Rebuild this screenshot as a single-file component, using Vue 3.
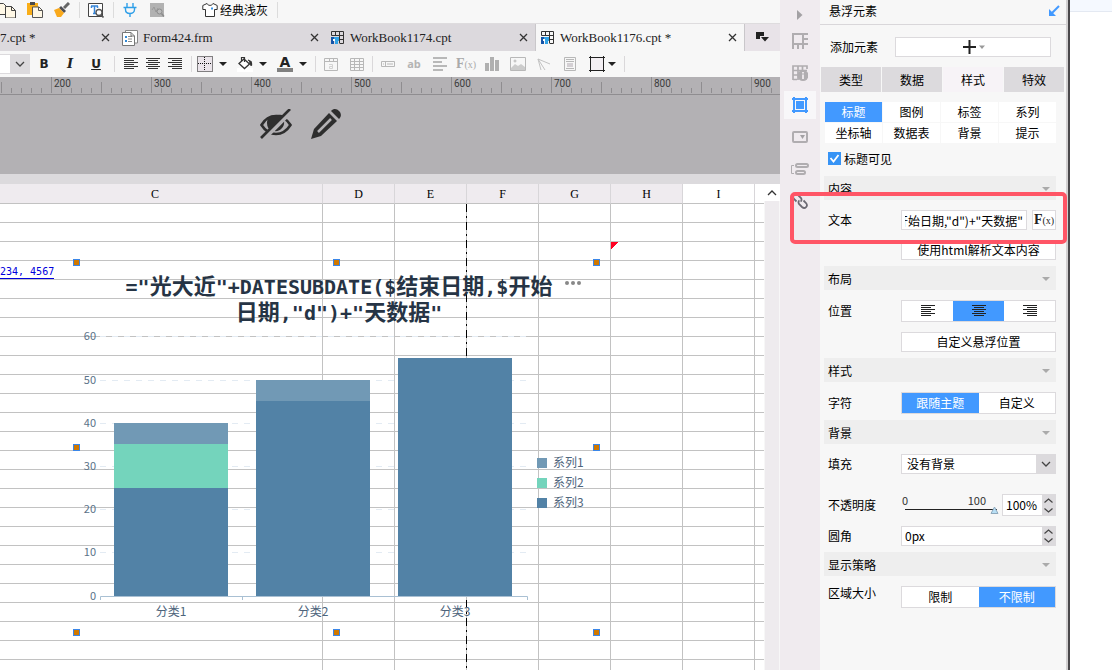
<script setup>
import { computed, onMounted, ref } from 'vue'

const rulerMarks = [200, 300, 400, 500, 600, 700, 800, 900]
const columns = ['C', 'D', 'E', 'F', 'G', 'H', 'I', '']
const rows = 40

const titleLines = [
  ['="', '光大近', '"+DATESUBDATE($', '结束日期', ',$', '开始'],
  ['', '日期', ',"d")+"', '天数据', '"']
]

const base = 334
const unit = 4.32
const series = [
  { name: '系列3', color: '#5282a6' },
  { name: '系列2', color: '#74d4bc' },
  { name: '系列1', color: '#7199b5' }
]
const data = [
  { label: '分类1', values: [25, 10, 5] },
  { label: '分类2', values: [45, 0, 5] },
  { label: '分类3', values: [55, 0, 0] }
]
const yOf = (v) => Math.floor(base - v * unit)
const bars = computed(() =>
  data.flatMap((d, i) => {
    let sum = 0
    return d.values.map((v, s) => {
      const bottom = yOf(sum)
      sum += v
      return { key: `${i}-${s}`, x: 38 + i * 142, y: yOf(sum), h: bottom - yOf(sum), color: series[s].color }
    })
  }).filter((b) => b.h > 0)
)
const legend = [...series].reverse()
const ticks = [0, 10, 20, 30, 40, 50, 60]
const handles = [[0, 0], [260, 0], [520, 0], [0, 185], [520, 185], [0, 370], [260, 370], [520, 370]]

const panelTabs = ['类型', '数据', '样式', '特效']
const activeTab = ref('样式')
const options = ['标题', '图例', '标签', '系列', '坐标轴', '数据表', '背景', '提示']
const activeOption = ref('标题')
const titleVisible = ref(true)
const formula = ref('="光大近"+DATESUBDATE($结束日期,$开始日期,"d")+"天数据"')
const formulaInput = ref(null)
const align = ref('center')
const charMode = ref('跟随主题')
const sizeMode = ref('不限制')
const opacity = ref(100)

onMounted(() => {
  formulaInput.value.scrollLeft = formulaInput.value.scrollWidth
})
</script>

<template>
  <div class="app">
    <main class="editor">
      <header class="topbar">
        <button class="tool" aria-label="复制">
          <svg width="16" height="16" viewBox="0 0 16 16"><path d="M-3 1.500H3.500L6.500 4.500V12.500H-3z" fill="#fff8e6" stroke="#444" /><path d="M5.500 4.500H11.500L15.500 8.500V16H5.500z" fill="#fff8e6" stroke="#444" /><path d="M11.500 4.500V8.500H15.500" fill="none" stroke="#444" /></svg>
        </button>
        <button class="tool" aria-label="粘贴">
          <svg width="16" height="16" viewBox="0 0 16 16"><path d="M0 1H11V13H0z" fill="#f9ae18" /><path d="M3 0H8V3H3z" fill="#4a4a4a" /><path d="M5.500 5H12L15.500 8.500V15.500H5.500z" fill="#fff8e6" stroke="#555" /><path d="M11.500 5V8.500H15.500" fill="none" stroke="#555" /></svg>
        </button>
        <button class="tool" aria-label="格式刷">
          <svg width="16" height="16" viewBox="0 0 16 16"><path d="M15 1L10 6" stroke="#666" stroke-width="3" /><path d="M7 4L12 9L10 11L5 6z" fill="#4f4f55" /><path d="M5 6L10 11L7 15H3L0 8z" fill="#f9a91c" /></svg>
        </button>
        <i class="bar-sep"></i>
        <button class="tool" aria-label="模板查找">
          <svg width="16" height="16" viewBox="0 0 16 16"><path d="M.5 1.500H14.500V14.500H.5z" fill="#fff" stroke="#444" /><path d="M3 4H10M6.500 4V11M5 11.500H8M3.500 4V6M9.500 4V6" fill="none" stroke="#3685d8" stroke-width="1.500" /><circle cx="11" cy="10.500" r="3" fill="#fff" stroke="#555" stroke-width="1.300" /><path d="M13 13L15.500 15.500" stroke="#555" stroke-width="1.600" /></svg>
        </button>
        <i class="bar-sep"></i>
        <button class="tool" aria-label="插件">
          <svg width="16" height="16" viewBox="0 0 16 16" fill="none" stroke="#2f9fe8" stroke-width="1.400"><path d="M5 1V5M11 1V5M1.500 5.500H14.500M3.500 6V7.500C3.500 10 5.500 11.500 8 11.500S12.500 10 12.500 7.500V6M8 11.500V15" /></svg>
        </button>
        <button class="tool" aria-label="性能分析">
          <svg width="16" height="16" viewBox="0 0 16 16"><path d="M1 1H15V15H1z" fill="#b2b2b2" /><path d="M3 8L5 5L7 10L9 6" fill="none" stroke="#999" /><circle cx="10.500" cy="9.500" r="2.500" fill="#bbb" stroke="#8c8c8c" /><path d="M12.500 11.500L15 14.500" stroke="#8c8c8c" stroke-width="1.500" /></svg>
        </button>
        <button class="theme">
          <svg width="16" height="16" viewBox="0 0 16 16"><path d="M5 1.500L.8 3.500V7.500H3.500V14.500H12.500V7.500H15.200V3.500L11 1.500C10 4 6 4 5 1.500z" fill="#fff" stroke="#333" /><path d="M9 6.500H11" stroke="#3a95ea" stroke-width="2" /></svg>
          <span>经典浅灰</span>
        </button>
        <i class="bar-sep"></i>
      </header>

      <nav class="tabs">
        <div class="tab first"><span>7.cpt *</span><button class="close" aria-label="关闭"><svg width="9" height="9" viewBox="0 0 9 9"><path d="M1 1L8 8M8 1L1 8" /></svg></button></div>
        <div class="tab">
          <svg width="16" height="16" viewBox="0 0 16 16"><path d="M3.500 3V.5H15.500V13H12" fill="#fff" stroke="#888" /><path d="M.5 2.500H9L12.500 6V15.500H.5z" fill="#fff" stroke="#777" /><path d="M3 6H5V8H3zM3 10H5V12H3z" fill="#3389d6" /><path d="M6 6.500H10M6 11.500H10M6 9H10" stroke="#888" /><path d="M9 2.500V6H12.500" fill="none" stroke="#777" /></svg>
          <span>Form424.frm</span><button class="close" aria-label="关闭"><svg width="9" height="9" viewBox="0 0 9 9"><path d="M1 1L8 8M8 1L1 8" /></svg></button>
        </div>
        <div v-for="(t, i) in ['WorkBook1174.cpt', 'WorkBook1176.cpt *']" :key="t" class="tab" :class="{ active: i === 1 }">
          <svg width="14" height="14" viewBox="0 0 14 14"><path d="M.5 4.500V.5H12.500V12.500H9M.5 4.500H12.500M4.500 .5V4.500M8.500 .5V12.500M8.500 8.500H12.500" fill="none" stroke="#333" /><path d="M0 6H3V13H0z" fill="#1454a8" /><path d="M3 6H8V10H7V13H4V10H3z" fill="#31a3e6" /><path d="M2 8H4V10H2z" fill="#fff" /></svg>
          <span>{{ t }}</span><button class="close" aria-label="关闭"><svg width="9" height="9" viewBox="0 0 9 9"><path d="M1 1L8 8M8 1L1 8" /></svg></button>
        </div>
        <button class="tab-menu" aria-label="标签列表">
          <svg width="13" height="11" viewBox="0 0 13 11"><path d="M0 0H8V4H4V7H0z M5 5H13L9 9.500z" fill="#222" /></svg>
        </button>
      </nav>

      <div class="format">
        <button class="combo" aria-label="字号"><i></i><svg width="10" height="6" viewBox="0 0 10 6"><path d="M1 1L5 5L9 1" fill="none" stroke="#444" stroke-width="1.300" /></svg></button>
        <button class="letter"><b>B</b></button>
        <button class="letter"><em>I</em></button>
        <button class="letter"><u>U</u></button>
        <i class="sep"></i>
        <button class="al" aria-label="左对齐"><svg width="14" height="12" viewBox="0 0 14 12"><path d="M0 .5H14M0 2.500H10M0 4.500H14M0 6.500H10M0 8.500H14M0 10.500H10" stroke="#333" /></svg></button>
        <button class="al" aria-label="居中"><svg width="14" height="12" viewBox="0 0 14 12"><path d="M0 .5H14M2 2.500H12M0 4.500H14M2 6.500H12M0 8.500H14M2 10.500H12" stroke="#333" /></svg></button>
        <button class="al" aria-label="右对齐"><svg width="14" height="12" viewBox="0 0 14 12"><path d="M0 .5H14M4 2.500H14M0 4.500H14M4 6.500H14M0 8.500H14M4 10.500H14" stroke="#333" /></svg></button>
        <i class="sep"></i>
        <div class="drops">
          <button class="drop" aria-label="边框"><svg width="16" height="16" viewBox="0 0 16 16"><path d="M.5 .5H15.500V15.500H.5z" fill="#eae4ea" stroke="#111" stroke-dasharray="1 1" /><path d="M7.500 1V15M1 7.500H15" stroke="#111" stroke-dasharray="1 1" /></svg><i class="caret"></i></button>
          <button class="drop" aria-label="填充"><svg width="16" height="16" viewBox="0 0 16 16"><path d="M0 12H16V16H0z" fill="#fff" /><path d="M7 3L12.500 8L7.500 12.500L2 7.500z" fill="#fff" stroke="#333" stroke-width="1.300" /><path d="M4.500 5V1.500H7.500V6M11 4L14 5.500V10" fill="none" stroke="#333" stroke-width="1.200" /><path d="M12 5C15 5 15.500 7 15 10L12.500 8z" fill="#333" /></svg><i class="caret"></i></button>
          <button class="drop" aria-label="字体颜色"><span class="fc">A</span><i class="caret"></i></button>
        </div>
        <i class="sep"></i>
        <div class="grays">
          <button class="gray" aria-label="单元格"><svg width="14" height="13" viewBox="0 0 14 13"><path d="M.5 .5H13.500V12.500H.5zM.5 3.500H13.500M5.500 .5V3.500M9.500 .5V3.500" /><path d="M5 6.500H8.500V10.500H5.500V8.500H8" stroke="#d3d3d3" /></svg></button>
          <button class="gray" aria-label="表格"><svg width="14" height="13" viewBox="0 0 14 13"><path d="M.5 .5H13.500V12.500H.5zM.5 3.500H13.500M.5 6.500H13.500M.5 9.500H13.500M4.500 .5V12.500M9.500 .5V12.500" /></svg></button>
        </div>
        <i class="sep"></i>
        <div class="grays">
          <button class="gray" aria-label="控件"><svg width="14" height="6" viewBox="0 0 14 6"><path d="M.5 .5H13.500V5.500H.5zM4.500 .5V5.500M6 3H12M2 3H3" /></svg></button>
          <button class="gray ab">ab</button>
          <button class="gray" aria-label="富文本"><svg width="14" height="14" viewBox="0 0 14 14"><path d="M0 1H14M0 5H9M0 9H14M0 13H10" stroke-width="2" /></svg></button>
          <button class="gray fx"><span><b>F</b>(x)</span></button>
          <button class="gray" aria-label="图表"><svg width="14" height="14" viewBox="0 0 14 14"><path d="M0 6H4V14H0zM5 0H9V14H5zM10 3H14V14H10z" fill="#b0b0b0" stroke="none" /></svg></button>
          <button class="gray" aria-label="图片"><svg width="16" height="14" viewBox="0 0 16 14"><path d="M.5 .5H15.500V13.500H.5z" /><path d="M1 11L5 7L8 9L11 7L15 10V13H1z" fill="#ccc" stroke="none" /><circle cx="5" cy="4" r="1" /></svg></button>
          <button class="gray" aria-label="斜线"><svg width="14" height="13" viewBox="0 0 14 13"><path d="M1 1L13 6M1 1L8 12M1 1L4 12" stroke="#c2c2c2" /></svg></button>
          <button class="gray" aria-label="子报表"><svg width="12" height="14" viewBox="0 0 12 14"><path d="M.5 .5H11.500V13.500H.5zM2 2.500H10M2 4.500H10M2 11.500H10" /><path d="M3 6H9V10H3z" fill="#d4d0d4" stroke="none" /></svg></button>
          <button class="drop wide" aria-label="悬浮元素"><svg width="16" height="16" viewBox="0 0 16 16"><path d="M1.500 0V16M14.500 0V16M0 1.500H16M0 14.500H16" stroke="#222" /><path d="M2 2H14V14H2z" fill="#f3eff3" /></svg><i class="caret"></i></button>
        </div>
        <i class="sep"></i>
      </div>

      <div class="ruler"><span v-for="m in rulerMarks" :key="m">{{ m }}</span></div>

      <div class="canvas">
        <button aria-label="隐藏">
          <svg width="32" height="30" viewBox="0 0 32 30"><path d="M1.500 16C6 8 11 7 16 7S26 9 30.500 16C26 23 21 25 16 25S6 23 1.500 16z" fill="none" stroke="#2e2e2e" stroke-width="2.600" /><path d="M22 6C10 5 7 9 7 14C7 18 9 20 10 21L24 8z" fill="#2e2e2e" /><path d="M24 12C25 18 20 23 14 22z" fill="#2e2e2e" /><path d="M3 31L32 2" stroke="#b3b1b4" stroke-width="4" /><path d="M1 29L30 0" stroke="#2e2e2e" stroke-width="2.600" /></svg>
        </button>
        <button aria-label="编辑">
          <svg width="30" height="30" viewBox="0 0 30 30"><path d="M3 20L18 4L26 12L10 27L0 30z" fill="#2e2e2e" /><path d="M20 2C23-1 26 0 28 2S31 7 28 10z" fill="#2e2e2e" /><path d="M7 23L20 10" stroke="#b3b1b4" stroke-width="2.500" /></svg>
        </button>
      </div>

      <section class="sheet-area">
        <div class="sheet">
          <table>
            <colgroup><col class="c-first" /><col v-for="n in 6" :key="n" class="c-mid" /><col /></colgroup>
            <thead><tr><th v-for="c in columns" :key="c" :class="{ light: c === 'I' || !c }">{{ c }}</th></tr></thead>
            <tbody>
              <tr v-for="r in rows" :key="r">
                <td v-for="(c, i) in columns" :key="c" :class="{ note: r === 3 && i === 5 }"><a v-if="r === 4 && i === 0" href="#">234, 4567</a></td>
              </tr>
            </tbody>
          </table>
          <div class="page-line"></div>
          <svg class="chart" width="520" height="370" viewBox="0 0 520 370">
            <text v-for="(line, li) in titleLines" :key="li" class="title" x="263" :y="32 + li * 26"><tspan v-for="(part, pi) in line" :key="pi" :class="{ han: pi % 2 }">{{ part }}</tspan></text>
            <g fill="#888"><circle cx="491" cy="21" r="2" /><circle cx="497" cy="21" r="2" /><circle cx="503" cy="21" r="2" /></g>
            <g v-for="t in ticks" :key="t">
              <path v-if="t" :d="`M24 ${yOf(t) + .5}H451`" stroke="#e3ebf3" stroke-dasharray="6 6" />
              <text class="tick" x="20" :y="yOf(t) + 4">{{ t }}</text>
            </g>
            <rect v-for="b in bars" :key="b.key" :x="b.x" :y="b.y" width="114" :height="b.h" :fill="b.color" />
            <path d="M24.500 338V334.500H451.500V338M166.500 334V338" fill="none" stroke="#a9c0d3" />
            <text v-for="(d, i) in data" :key="d.label" class="cat" :x="95 + i * 142" y="354">{{ d.label }}</text>
            <g v-for="(s, i) in legend" :key="s.name">
              <rect x="461" :y="196 + i * 20" width="10" height="10" :fill="s.color" />
              <text class="leg" x="477" :y="205 + i * 20">{{ s.name }}</text>
            </g>
            <rect v-for="(h, i) in handles" :key="'h' + i" :x="h[0] - 2.5" :y="h[1] - 2.5" width="6" height="6" fill="#d07800" stroke="#3a86e8" />
          </svg>
        </div>
        <div class="scroll">
          <button aria-label="向上滚动"><svg width="10" height="6" viewBox="0 0 10 6"><path d="M1 5L5 1L9 5" fill="none" stroke="#333" stroke-width="1.300" /></svg></button>
          <i></i>
        </div>
      </section>
    </main>

    <aside class="rail">
      <button class="fold" aria-label="收起"><svg width="6" height="10" viewBox="0 0 6 10"><path d="M0 0L5.500 5L0 10z" fill="#a3a1a4" /></svg></button>
      <button aria-label="单元格元素"><svg width="16" height="16" viewBox="0 0 16 16" fill="none" stroke="#b0adb0" stroke-width="2"><path d="M1 16V1H16M11 1V11H1M11 6H16M11 11H16M6 11V16M11 11V16" /></svg></button>
      <button aria-label="单元格属性"><svg width="16" height="16" viewBox="0 0 16 16"><path d="M1 15V1H15V4M1 5.500H15M1 10H6M6 1V15M10.500 1V6M1 14.500H5" fill="none" stroke="#b0adb0" stroke-width="1.700" /><circle cx="11" cy="10.500" r="5.500" fill="#b0adb0" /><path d="M11 7V8.500M11 9.500V14" stroke="#f0ebef" stroke-width="1.800" /></svg></button>
      <button class="on" aria-label="悬浮元素"><svg width="16" height="16" viewBox="0 0 16 16"><path d="M0 2H16M0 14H16M2 0V16M14 0V16" stroke="#4299ff" stroke-width="2" /><path d="M4 4H12V12H4z" fill="#4299ff" /></svg></button>
      <button aria-label="控件设置"><svg width="16" height="12" viewBox="0 0 16 12"><rect x="1" y="1" width="14" height="10" rx="1" fill="none" stroke="#b0adb0" stroke-width="2" /><path d="M8 4H13L10.500 8z" fill="#a3a1a4" /></svg></button>
      <button aria-label="条件属性"><svg width="18" height="12" viewBox="0 0 18 12" fill="none" stroke="#b0adb0"><path d="M3 2.500H.5V10.500H3" /><rect x="5" y="1" width="12" height="3" rx="1.500" stroke-width="2" /><rect x="5" y="8" width="9" height="3" rx="1.500" stroke-width="2" /></svg></button>
      <button aria-label="超级链接"><svg width="16" height="16" viewBox="0 0 16 16" fill="none" stroke="#6c6a73" stroke-width="1.800"><path d="M4.500 8.500L2 6C-.5 3 3-.5 6 2L9 5C10 6.500 9.500 8 8.500 8.500M11.500 7.500L14 10C16.500 13 13 16.500 10 14L7 11C6 9.500 6.500 8 7.500 7.500" /></svg></button>
    </aside>

    <aside class="panel">
      <header class="panel-title"><span>悬浮元素</span><button aria-label="停靠"><svg width="12" height="12" viewBox="0 0 12 12"><path d="M11 1L3 9" stroke="#4299ff" stroke-width="2" /><path d="M1 4V11H8z" fill="#4299ff" /></svg></button></header>
      <div class="add-row">
        <span id="add-label">添加元素</span>
        <button aria-labelledby="add-label"><svg width="24" height="14" viewBox="0 0 24 14"><path d="M0 7H13M6.500 0V14" stroke="#222" stroke-width="2" /><path d="M16 5.500H22L19 9z" fill="#999" /></svg></button>
      </div>
      <div class="panel-tabs"><button v-for="t in panelTabs" :key="t" :class="{ on: t === activeTab }" @click="activeTab = t">{{ t }}</button></div>
      <div class="options"><button v-for="o in options" :key="o" :class="{ on: o === activeOption }" @click="activeOption = o">{{ o }}</button></div>
      <label class="check"><input v-model="titleVisible" type="checkbox" /><svg width="13" height="13" viewBox="0 0 13 13"><path d="M2.500 6L5.500 9.500L10.500 3" fill="none" stroke="#fff" stroke-width="1.800" /></svg><span>标题可见</span></label>

      <section>
        <h3>内容<i></i></h3>
        <div class="body">
          <div class="row mark">
            <label for="f-text">文本</label>
            <div class="ctl pair">
              <input id="f-text" ref="formulaInput" v-model="formula" type="text" />
              <button class="fxb" aria-label="公式"><span><b>F</b>(x)</span></button>
            </div>
          </div>
          <div class="row"><span></span><button class="ctl plain">使用html解析文本内容</button></div>
        </div>
      </section>
      <section>
        <h3>布局<i></i></h3>
        <div class="body">
          <div class="row">
            <span>位置</span>
            <div class="ctl seg">
              <button :class="{ on: align === 'left' }" aria-label="居左" @click="align = 'left'"><svg width="14" height="12" viewBox="0 0 14 12"><path d="M0 .5H14M0 2.500H10M0 4.500H14M0 6.500H10M0 8.500H14M0 10.500H10" stroke="#222" /></svg></button>
              <button :class="{ on: align === 'center' }" aria-label="居中" @click="align = 'center'"><svg width="14" height="12" viewBox="0 0 14 12"><path d="M0 .5H14M2 2.500H12M0 4.500H14M2 6.500H12M0 8.500H14M2 10.500H12" stroke="#222" /></svg></button>
              <button :class="{ on: align === 'right' }" aria-label="居右" @click="align = 'right'"><svg width="14" height="12" viewBox="0 0 14 12"><path d="M0 .5H14M4 2.500H14M0 4.500H14M4 6.500H14M0 8.500H14M4 10.500H14" stroke="#222" /></svg></button>
            </div>
          </div>
          <div class="row"><span></span><button class="ctl plain">自定义悬浮位置</button></div>
        </div>
      </section>
      <section>
        <h3>样式<i></i></h3>
        <div class="body">
          <div class="row"><span>字符</span><div class="ctl seg"><button v-for="m in ['跟随主题', '自定义']" :key="m" :class="{ on: m === charMode }" @click="charMode = m">{{ m }}</button></div></div>
        </div>
      </section>
      <section>
        <h3>背景<i></i></h3>
        <div class="body">
          <div class="row">
            <label for="f-fill">填充</label>
            <div class="ctl select">
              <select id="f-fill"><option>没有背景</option></select>
              <svg width="10" height="6" viewBox="0 0 10 6"><path d="M1 1L5 5L9 1" fill="none" stroke="#444" stroke-width="1.300" /></svg>
            </div>
          </div>
          <div class="row spaced">
            <label for="f-opacity">不透明度</label>
            <div class="ctl pair tall">
              <div class="slider">
                <div class="scale"><span>0</span><span>100</span></div>
                <input id="f-opacity" v-model="opacity" type="range" min="0" max="100" />
                <svg width="9" height="8" viewBox="0 0 9 8"><path d="M4.500 1L8 7.500H1z" fill="#b8dff5" stroke="#8fa9bd" /></svg>
              </div>
              <div class="spin small">
                <input type="text" value="100%" aria-label="不透明度数值" />
                <span><button aria-label="增加"><svg width="9" height="5" viewBox="0 0 9 5"><path d="M.5 4.500L4.500 1L8.500 4.500" /></svg></button><button aria-label="减少"><svg width="9" height="5" viewBox="0 0 9 5"><path d="M.5 .5L4.500 4L8.500 .5" /></svg></button></span>
              </div>
            </div>
          </div>
          <div class="row">
            <label for="f-radius">圆角</label>
            <div class="ctl spin">
              <input id="f-radius" type="text" value="0px" />
              <span><button aria-label="增加"><svg width="9" height="5" viewBox="0 0 9 5"><path d="M.5 4.500L4.500 1L8.500 4.500" /></svg></button><button aria-label="减少"><svg width="9" height="5" viewBox="0 0 9 5"><path d="M.5 .5L4.500 4L8.500 .5" /></svg></button></span>
            </div>
          </div>
        </div>
      </section>
      <section>
        <h3>显示策略<i></i></h3>
        <div class="body">
          <div class="row top"><span>区域大小</span><div class="ctl seg"><button v-for="m in ['限制', '不限制']" :key="m" :class="{ on: m === sizeMode }" @click="sizeMode = m">{{ m }}</button></div></div>
        </div>
      </section>
    </aside>
    <div class="outside"><i></i></div>
  </div>
</template>

<style>
body { margin: 0; }
</style>

<style scoped>
* { box-sizing: border-box; }
.app { display: flex; height: 100vh; overflow: hidden; font: 12px/16px "Noto Sans CJK SC", sans-serif; color: #000; background: #fff; }
button { border: 0; padding: 0; background: none; font: inherit; color: inherit; display: flex; align-items: center; justify-content: center; }
input, select { font: inherit; color: inherit; min-width: 0; border-radius: 0; outline: 0; }
svg { display: block; flex: none; }

.editor { flex: 1; min-width: 0; display: flex; flex-direction: column; background: #f7f7f7; overflow: hidden; }
.topbar { flex: none; height: 24px; padding-top: 1px; display: flex; align-items: flex-start; border-bottom: 1px solid #dedcde; }
.tool { width: 16px; height: 18px; flex: none; }
.tool + .tool { margin-left: 11px; }
.bar-sep { width: 1px; height: 16px; margin: 1px 8px 0 9px; background: #dcdcdc; }
.theme { height: 18px; gap: 2px; margin-left: 37px; }

.tabs { flex: none; height: 27px; display: flex; background: #dcd9dd; }
.tab { width: 209px; flex: none; display: flex; align-items: center; padding: 0 7px 0 5px; gap: 5px; font: 13px/16px "Liberation Serif", serif; color: #222; }
.tab.first { width: 117px; padding-left: 0; }
.tab.active { background: #f7f7f7; border-left: 1px solid #c9c7ca; }
.tab span { flex: 1; white-space: nowrap; }
.close { width: 9px; height: 9px; }
.close path { fill: none; stroke: #333; stroke-width: 1.3; }
.tab-menu { flex: 1; background: #e8e3e8; border-left: 1px solid #c9c7ca; }

.format { flex: none; height: 26px; display: flex; align-items: center; color: #222; }
.combo { width: 30px; height: 20px; background: #dcdadd; justify-content: space-between; padding-right: 5px; margin-right: 1px; }
.combo i { width: 10px; height: 18px; background: #fff; }
.letter { width: 26px; font: 13px/16px "DejaVu Sans", sans-serif; }
.letter b, .letter u { font-weight: 700; font-size: 12px; }
.letter em { font: italic bold 13px/16px "DejaVu Serif", serif; }
.sep { width: 1px; height: 16px; margin: 0 5px; background: #dad8da; }
.al { width: 22px; height: 20px; }
.drops { display: flex; gap: 7px; }
.drop { width: 33px; height: 20px; gap: 6px; justify-content: flex-start; }
.drop.wide { gap: 3px; padding-left: 3px; }
.caret { border: 4px solid transparent; border-top: 4px solid #222; border-bottom: 0; }
.fc { width: 16px; height: 15px; border-bottom: 4px solid #808080; font: bold 14px/11px "DejaVu Sans", sans-serif; text-align: center; }
.grays { display: flex; gap: 6px; }
.gray { width: 20px; height: 20px; }
.gray svg { fill: none; stroke: #b8b8b8; }
.ab { font: bold 11px/16px "Open Sans", sans-serif; color: #b4b4b4; }
.fx { color: #aaa; font: 10px/16px "Liberation Serif", serif; }
.fx b, .fxb b { font-size: 14px; }

.ruler { flex: none; height: 18px; display: flex; padding-left: 54px; border-bottom: 1px solid #8f8d90; color: #3c3c3c; font: 10px/14px Roboto, sans-serif;
  background:
    repeating-linear-gradient(90deg, #8f8d90 0 1px, transparent 1px 100px) 51px 0 / 100% 16px no-repeat,
    repeating-linear-gradient(90deg, #8f8d90 0 1px, transparent 1px 100px) 1px 5px / 100% 11px no-repeat,
    repeating-linear-gradient(90deg, #8f8d90 0 1px, transparent 1px 10px) 1px 11px / 100% 5px no-repeat,
    #b3b1b4;
  background-clip: padding-box; }
.ruler span { width: 100px; flex: none; }
.canvas { flex: none; height: 89px; display: flex; gap: 19px; padding: 14px 0 0 260px; background: #b3b1b4; border-bottom: 10px solid #dcdadd; align-items: flex-start; }

.sheet-area { flex: 1; min-height: 0; display: flex; overflow: hidden; background: #fff; }
.sheet { flex: 1; min-width: 0; position: relative; overflow: hidden; }
table { width: 100%; table-layout: fixed; border-collapse: separate; border-spacing: 0; }
.c-first { width: 323px; }
.c-mid { width: 72px; }
th, td { padding: 0; border-right: 1px solid #c2c2c2; border-bottom: 1px solid #c2c2c2; }
th { height: 20px; background: #efebef; border-right-color: #d8d6d9; font: 12px/19px "Liberation Serif", serif; padding-top: 1px; line-height: 18px; }
th.light { background: #fff; }
th:first-child { padding-right: 12px; }
th:last-child, td:last-child { border-right: 0; }
td { height: 19px; font: 10px/18px "DejaVu Sans Mono", monospace; }
td a { display: block; width: 54px; height: 17px; line-height: 19px; color: #00d; white-space: nowrap; text-decoration: none; border-bottom: 1px solid #00d; }
.note { background: linear-gradient(135deg, #f02 0 5px, transparent 5px) no-repeat; }
.page-line { position: absolute; left: 466px; top: 20px; bottom: 0; width: 1px; background: repeating-linear-gradient(#000 0 8px, transparent 8px 12px, #000 12px 14px, transparent 14px 18px); }
.chart { position: absolute; left: 76px; top: 78px; overflow: visible; }
.title { text-anchor: middle; fill: #263445; font: bold 20px "DejaVu Sans Mono", monospace; white-space: pre; }
.han { font: bold 22px "Noto Sans CJK SC", sans-serif; }
.tick { text-anchor: end; font-size: 11px; fill: #5b7288; }
.cat { text-anchor: middle; fill: #4d647b; }
.leg { fill: #4d647b; }
.scroll { width: 16px; flex: none; display: flex; flex-direction: column; background: #f7f7f7; }
.scroll button { height: 17px; background: #fff; }
.scroll i { flex: 1; margin: 0 1px; background: #eeebee; }

.rail { width: 40px; flex: none; background: #f0ebef; padding-top: 5px; display: flex; flex-direction: column; align-items: center; }
.rail button { width: 32px; height: 28px; margin: 2px 0; flex: none; }
.rail .fold { height: 20px; margin: 0; }
.rail .on { background: #f8f7f9; }

.panel { width: 246px; flex: none; background: #f7f7f7; box-shadow: 2px 0 0 #d2d0d1; }
.panel-title { height: 25px; padding: 0 6px 2px 9px; display: flex; align-items: center; justify-content: space-between; border-bottom: 1px solid #d9d7da; }
.add-row { display: flex; align-items: center; justify-content: space-between; padding: 12px 15px 10px 10px; height: 42px; }
.add-row button { width: 156px; height: 20px; border: 1px solid #dcdadd; background: #fff; padding-left: 4px; }
.panel-tabs { display: grid; grid-template-columns: repeat(4, 1fr); gap: 1px; padding: 0 2px 0 1px; height: 25px; }
.panel-tabs button { background: #dcdadd; }
.panel-tabs .on { background: #f7f3f7; }
.options { display: grid; grid-template-columns: repeat(4, 1fr); grid-auto-rows: 20px; gap: 1px; margin: 10px 10px 0 5px; }
.options button { background: #fff; }
.options .on, .seg .on { background: #4299ff; color: #fff; }
.check { display: flex; align-items: center; height: 13px; margin: 9px 0 11px 8px; position: relative; gap: 3px; }
.check input { appearance: none; width: 13px; height: 13px; margin: 0; background: #fff; border: 1px solid #3794f5; }
.check input:checked { background: #3794f5; }
.check svg { position: absolute; left: 0; top: 0; pointer-events: none; }

section h3 { margin: 0 10px 0 4px; height: 24px; padding: 1px 6px 0 4px; display: flex; align-items: center; justify-content: space-between; background: #eee; font-size: 12px; font-weight: 400; }
section h3 i { border: 4px solid transparent; border-top: 4px solid #aaa; border-bottom: 0; }
.body { display: flex; flex-direction: column; gap: 10px; padding: 10px 10px 6px 8px; }
.row { display: flex; align-items: center; justify-content: space-between; position: relative; }
.row.spaced { margin-top: 10px; }
.row.top { align-items: flex-start; line-height: 14px; }
.row.mark::after { content: ""; position: absolute; left: -38px; right: -11px; top: -18px; bottom: -14px; border: 4px solid #ff5566; border-radius: 5px; z-index: 2; pointer-events: none; }
.ctl { width: 155px; height: 20px; flex: none; }
.pair { display: flex; justify-content: space-between; align-items: center; }
.pair.tall { height: 22px; }
.pair > input { width: 126px; height: 20px; border: 1px solid #dcdadd; padding: 0 3px; background: #fff; }
.fxb { width: 24px; height: 20px; border: 1px solid #dcdadd; background: #fff; font: 10px/16px "Liberation Serif", serif; color: #222; }
.plain { border: 1px solid #dcdadd; background: #fff; }
.seg { display: flex; height: 22px; border: 1px solid #dcdadd; background: #fff; }
.seg button { flex: 1; }
.select { position: relative; }
.select select { appearance: none; display: block; width: 100%; height: 20px; border: 1px solid #dcdadd; padding: 0 24px 0 5px; background: #fff; border-right: 20px solid #dcdadd; }
.select svg { position: absolute; right: 5px; top: 7px; pointer-events: none; }
.slider { width: 98px; height: 22px; position: relative; padding: 0 4px; }
.scale { display: flex; justify-content: space-between; padding-right: 9px; margin: -1px 0 0 -3px; font: 11px/14px "Noto Sans CJK SC", sans-serif; color: #333; }
.slider input { appearance: none; display: block; width: 92px; height: 5px; margin: 0; background: linear-gradient(#222, #222) 0 2px / 100% 1px no-repeat; }
.slider input::-webkit-slider-thumb { appearance: none; width: 8px; height: 5px; }
.slider svg { position: absolute; right: 0; top: 12px; pointer-events: none; }
.spin { display: flex; border: 1px solid #dcdadd; background: #fff; }
.spin.small { width: 54px; height: 22px; }
.spin input { flex: 1; border: 0; padding: 0 3px; background: none; }
.spin > span { width: 13px; display: flex; flex-direction: column; background: #dcdadd; }
.spin > span button { flex: 1; }
.spin > span svg { fill: none; stroke: #444; stroke-width: 1.2; }

.outside { width: 44px; flex: none; background: #fff; border-left: 2px solid #4a484b; margin-left: 2px; }
.outside i { display: block; height: 12px; background: #f5f9ff; border-bottom: 1px solid #e4e9f2; }
</style>
